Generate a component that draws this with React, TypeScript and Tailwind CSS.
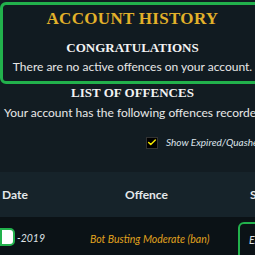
import { Check } from 'lucide-react';

const serif = { fontFamily: '"Liberation Serif", "DejaVu Serif", serif' };
const sans = { fontFamily: 'Lato, "Open Sans", sans-serif' };

const App = () => {
  return (
    <div className="w-[255px] h-[255px] overflow-hidden bg-[#121c22] text-white" style={sans}>
      <div className="w-[265px] h-[82px] mt-[2px] border-[3px] border-[#22b14c] rounded-[6px] bg-[#111b21] flex flex-col items-center">
        <h1 className="mt-[4px] text-[17px] leading-[20px] font-bold text-[#e2b12a] tracking-[0.3px]" style={serif}>
          ACCOUNT HISTORY
        </h1>
        <h2 className="mt-[11px] text-[13px] leading-[15px] font-bold text-[#f3f3f3]" style={serif}>
          CONGRATULATIONS
        </h2>
        <p className="mt-[4px] text-[12px] leading-[15px] text-[#e8e8e8] whitespace-nowrap">
          There are no active offences on your account.
        </p>
      </div>

      <div className="w-[265px] flex flex-col items-center">
        <h2 className="mt-[1px] text-[13px] leading-[15px] font-bold text-[#f3f3f3]" style={serif}>
          LIST OF OFFENCES
        </h2>
      </div>
      <p className="mt-[5px] ml-[4px] text-[12px] leading-[15px] text-[#e8e8e8] whitespace-nowrap">
        Your account has the following offences recorded against it.
      </p>

      <div className="flex items-center mt-[15px] pl-[146px] gap-[8px] whitespace-nowrap h-[15px]">
        <div className="w-[12px] h-[12px] bg-black border border-[#333] flex items-center justify-center shrink-0">
          <Check size={11} strokeWidth={3.5} className="text-[#f2e600]" />
        </div>
        <span className="text-[10px] italic text-[#dde3ea]">Show Expired/Quashed</span>
      </div>

      <div className="mt-[22px] h-[45px] bg-[#16232a] flex items-center text-[12px] font-bold text-[#e4e8ea] whitespace-nowrap">
        <span className="ml-[2px] w-[123px] shrink-0">Date</span>
        <span className="w-[125px] shrink-0">Offence</span>
        <span className="shrink-0">Status</span>
      </div>

      <div className="h-[40px] bg-[#0b1216] flex items-start whitespace-nowrap">
        <div className="mt-[11px] w-[15px] h-[18px] bg-white border-2 border-[#22b14c] rounded-r-[5px] shrink-0" />
        <span className="mt-[14px] ml-[2px] text-[10.5px] italic text-[#dfe3e6] w-[73px] shrink-0">-2019</span>
        <span className="mt-[15px] text-[10.5px] italic text-[#e0a21e] w-[148px] shrink-0">Bot Busting Moderate (ban)</span>
        <div className="mt-[5px] h-[40px] w-[60px] border-2 border-[#22b14c] rounded-[6px] shrink-0 pl-[9px] pt-[9px] text-[10.5px] italic text-[#dfe3e6]">
          Expired
        </div>
      </div>
    </div>
  );
};

export default App;
